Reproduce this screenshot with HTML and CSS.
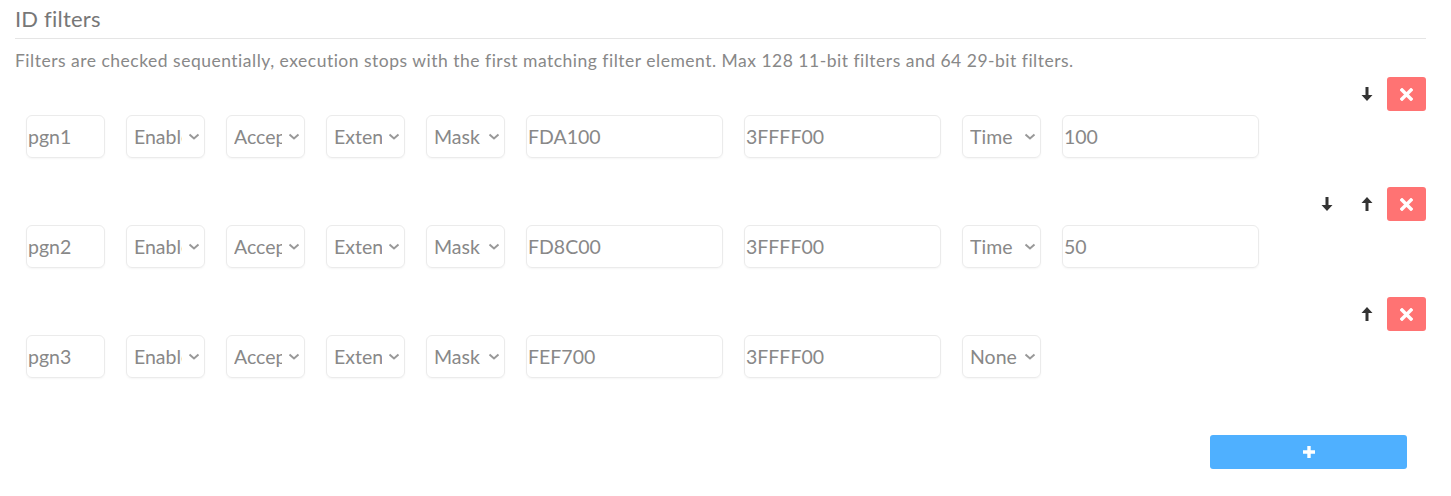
FILE: index.html
```html
<!DOCTYPE html>
<html>
<head>
<meta charset="utf-8">
<link rel="stylesheet" href="styles.css">
</head>
<body>
<div class="page">
  <h2 class="title">ID filters</h2>
  <p class="desc">Filters are checked sequentially, execution stops with the first matching filter element. Max 128 11-bit filters and 64 29-bit filters.</p>

  <div class="filter">
    <div class="actions">
      <button class="arrow" title="down"><svg width="12" height="14" viewBox="0 0 12 14"><path d="M4.5 0h3v8h4L6 14 0.5 8h4z" fill="#333"/></svg></button>
      <button class="del"><svg width="13" height="13" viewBox="0 0 13 13"><path d="M2 2l9 9M11 2l-9 9" stroke="#fff" stroke-width="3.4" stroke-linecap="square"/></svg></button>
    </div>
    <div class="fields">
      <div class="field small text">pgn1</div>
      <div class="field small select"><span class="val">Enable</span><svg class="chev" width="12" height="7" viewBox="0 0 12 7"><path d="M1.5 1.5l4.5 4 4.5-4" fill="none" stroke="#999" stroke-width="2"/></svg></div>
      <div class="field small select"><span class="val">Accept</span><svg class="chev" width="12" height="7" viewBox="0 0 12 7"><path d="M1.5 1.5l4.5 4 4.5-4" fill="none" stroke="#999" stroke-width="2"/></svg></div>
      <div class="field small select"><span class="val">Extended</span><svg class="chev" width="12" height="7" viewBox="0 0 12 7"><path d="M1.5 1.5l4.5 4 4.5-4" fill="none" stroke="#999" stroke-width="2"/></svg></div>
      <div class="field small select"><span class="val">Mask</span><svg class="chev" width="12" height="7" viewBox="0 0 12 7"><path d="M1.5 1.5l4.5 4 4.5-4" fill="none" stroke="#999" stroke-width="2"/></svg></div>
      <div class="field large text">FDA100</div>
      <div class="field large text">3FFFF00</div>
      <div class="field small select"><span class="val">Time</span><svg class="chev" width="12" height="7" viewBox="0 0 12 7"><path d="M1.5 1.5l4.5 4 4.5-4" fill="none" stroke="#999" stroke-width="2"/></svg></div>
      <div class="field large text">100</div>
    </div>
  </div>

  <div class="filter">
    <div class="actions">
      <button class="arrow" title="down"><svg width="12" height="14" viewBox="0 0 12 14"><path d="M4.5 0h3v8h4L6 14 0.5 8h4z" fill="#333"/></svg></button>
      <button class="arrow" title="up"><svg width="12" height="14" viewBox="0 0 12 14"><path d="M4.5 14h3V6h4L6 0 0.5 6h4z" fill="#333"/></svg></button>
      <button class="del"><svg width="13" height="13" viewBox="0 0 13 13"><path d="M2 2l9 9M11 2l-9 9" stroke="#fff" stroke-width="3.4" stroke-linecap="square"/></svg></button>
    </div>
    <div class="fields">
      <div class="field small text">pgn2</div>
      <div class="field small select"><span class="val">Enable</span><svg class="chev" width="12" height="7" viewBox="0 0 12 7"><path d="M1.5 1.5l4.5 4 4.5-4" fill="none" stroke="#999" stroke-width="2"/></svg></div>
      <div class="field small select"><span class="val">Accept</span><svg class="chev" width="12" height="7" viewBox="0 0 12 7"><path d="M1.5 1.5l4.5 4 4.5-4" fill="none" stroke="#999" stroke-width="2"/></svg></div>
      <div class="field small select"><span class="val">Extended</span><svg class="chev" width="12" height="7" viewBox="0 0 12 7"><path d="M1.5 1.5l4.5 4 4.5-4" fill="none" stroke="#999" stroke-width="2"/></svg></div>
      <div class="field small select"><span class="val">Mask</span><svg class="chev" width="12" height="7" viewBox="0 0 12 7"><path d="M1.5 1.5l4.5 4 4.5-4" fill="none" stroke="#999" stroke-width="2"/></svg></div>
      <div class="field large text">FD8C00</div>
      <div class="field large text">3FFFF00</div>
      <div class="field small select"><span class="val">Time</span><svg class="chev" width="12" height="7" viewBox="0 0 12 7"><path d="M1.5 1.5l4.5 4 4.5-4" fill="none" stroke="#999" stroke-width="2"/></svg></div>
      <div class="field large text">50</div>
    </div>
  </div>

  <div class="filter">
    <div class="actions">
      <button class="arrow" title="up"><svg width="12" height="14" viewBox="0 0 12 14"><path d="M4.5 14h3V6h4L6 0 0.5 6h4z" fill="#333"/></svg></button>
      <button class="del"><svg width="13" height="13" viewBox="0 0 13 13"><path d="M2 2l9 9M11 2l-9 9" stroke="#fff" stroke-width="3.4" stroke-linecap="square"/></svg></button>
    </div>
    <div class="fields">
      <div class="field small text">pgn3</div>
      <div class="field small select"><span class="val">Enable</span><svg class="chev" width="12" height="7" viewBox="0 0 12 7"><path d="M1.5 1.5l4.5 4 4.5-4" fill="none" stroke="#999" stroke-width="2"/></svg></div>
      <div class="field small select"><span class="val">Accept</span><svg class="chev" width="12" height="7" viewBox="0 0 12 7"><path d="M1.5 1.5l4.5 4 4.5-4" fill="none" stroke="#999" stroke-width="2"/></svg></div>
      <div class="field small select"><span class="val">Extended</span><svg class="chev" width="12" height="7" viewBox="0 0 12 7"><path d="M1.5 1.5l4.5 4 4.5-4" fill="none" stroke="#999" stroke-width="2"/></svg></div>
      <div class="field small select"><span class="val">Mask</span><svg class="chev" width="12" height="7" viewBox="0 0 12 7"><path d="M1.5 1.5l4.5 4 4.5-4" fill="none" stroke="#999" stroke-width="2"/></svg></div>
      <div class="field large text">FEF700</div>
      <div class="field large text">3FFFF00</div>
      <div class="field small select"><span class="val">None</span><svg class="chev" width="12" height="7" viewBox="0 0 12 7"><path d="M1.5 1.5l4.5 4 4.5-4" fill="none" stroke="#999" stroke-width="2"/></svg></div>
    </div>
  </div>

  <div class="footer">
    <button class="add"><svg width="14" height="14" viewBox="0 0 14 14"><path d="M7 1v12M1 7h12" stroke="#fff" stroke-width="3.4"/></svg></button>
  </div>
</div>
</body>
</html>
```

FILE: styles.css
```css
html, body {
  margin: 0;
  padding: 0;
  background: #fff;
}
body {
  font-family: Lato, "Open Sans", sans-serif;
  color: #888;
}
.page {
  padding: 5px 25px 0 15px;
}
.title {
  margin: 0;
  font-size: 22px;
  font-weight: 400;
  color: #777;
  line-height: 28px;
  padding-bottom: 5px;
  border-bottom: 1px solid #e5e5e5;
  letter-spacing: 0.2px;
}
.desc {
  margin: 10px 0 0;
  font-size: 17.5px;
  line-height: 24px;
  color: #888;
  letter-spacing: 0.5px;
}
.filter {
  margin-top: 4px;
}
.filter + .filter {
  margin-top: 29px;
}
.actions {
  display: flex;
  justify-content: flex-end;
  align-items: center;
  height: 34px;
}
.arrow {
  width: 40px;
  height: 34px;
  border: 0;
  background: none;
  padding: 0;
  display: flex;
  align-items: center;
  justify-content: center;
}
.del {
  width: 39px;
  height: 34px;
  border: 0;
  border-radius: 3px;
  background: #ff7373;
  padding: 0;
  display: flex;
  align-items: center;
  justify-content: center;
}
.fields {
  display: flex;
  gap: 21px;
  padding-left: 11px;
  margin-top: 4px;
}
.field {
  box-sizing: border-box;
  height: 43px;
  border: 1px solid #ebebeb;
  border-radius: 6px;
  box-shadow: 0 1px 2px rgba(0,0,0,0.04);
  font-size: 19.5px;
  color: #888;
  display: flex;
  align-items: center;
  overflow: hidden;
  white-space: nowrap;
}
.small {
  width: 79px;
}
.large {
  width: 197px;
}
.text {
  padding-left: 1px;
}
.select {
  padding: 0 4px 0 7px;
}
.select .val {
  flex: 1;
  overflow: hidden;
  min-width: 0;
}
.select .chev {
  flex: none;
  margin-left: 6px;
}
.footer {
  display: flex;
  justify-content: flex-end;
  margin-top: 57px;
  padding-right: 19px;
}
.add {
  width: 197px;
  height: 34px;
  border: 0;
  border-radius: 3px;
  background: #4fb0ff;
  padding: 0;
  display: flex;
  align-items: center;
  justify-content: center;
}
```
